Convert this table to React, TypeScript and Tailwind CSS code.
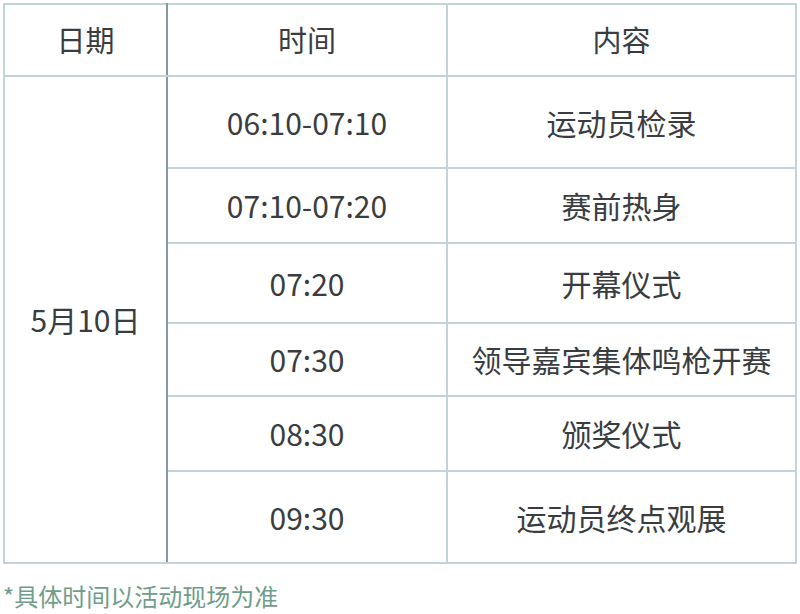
export default function App() {
  const rows = [
    { time: "06:10-07:10", item: "运动员检录", h: "h-[92px]" },
    { time: "07:10-07:20", item: "赛前热身", h: "h-[75px]" },
    { time: "07:20", item: "开幕仪式", h: "h-[80px]" },
    { time: "07:30", item: "领导嘉宾集体鸣枪开赛", h: "h-[73px]" },
    { time: "08:30", item: "颁奖仪式", h: "h-[75px]" },
    { time: "09:30", item: "运动员终点观展", h: "h-[92px]" },
  ];

  return (
    <div
      className="w-[800px] h-[614px] bg-white pt-[3px] pl-[3px] text-[#3a3d3f]"
      style={{ fontFamily: '"Noto Sans CJK SC", "Noto Sans", sans-serif' }}
    >
      <table className="border-collapse w-[792px] table-fixed text-[30px]">
        <colgroup>
          <col className="w-[163px]" />
          <col className="w-[280px]" />
          <col className="w-[349px]" />
        </colgroup>
        <thead>
          <tr className="h-[72px] text-[29px]">
            <th className="font-normal border-2 border-[#c3d3da] border-r-[#8a979c]">日期</th>
            <th className="font-normal border-2 border-[#c3d3da] border-l-[#8a979c]">时间</th>
            <th className="font-normal border-2 border-[#c3d3da]">内容</th>
          </tr>
        </thead>
        <tbody>
          {rows.map((r, i) => (
            <tr key={i} className={r.h}>
              {i === 0 && (
                <td rowSpan={6} className="text-center border-2 border-[#c3d3da] border-r-[#8a979c]">
                  5月10日
                </td>
              )}
              <td className="text-center border-2 border-[#c3d3da] border-l-[#8a979c]">{r.time}</td>
              <td className="text-center border-2 border-[#c3d3da]">{r.item}</td>
            </tr>
          ))}
        </tbody>
      </table>
      <p className="mt-[20px] text-[24px] leading-none text-[#6f9d8b]">*具体时间以活动现场为准</p>
    </div>
  );
}
